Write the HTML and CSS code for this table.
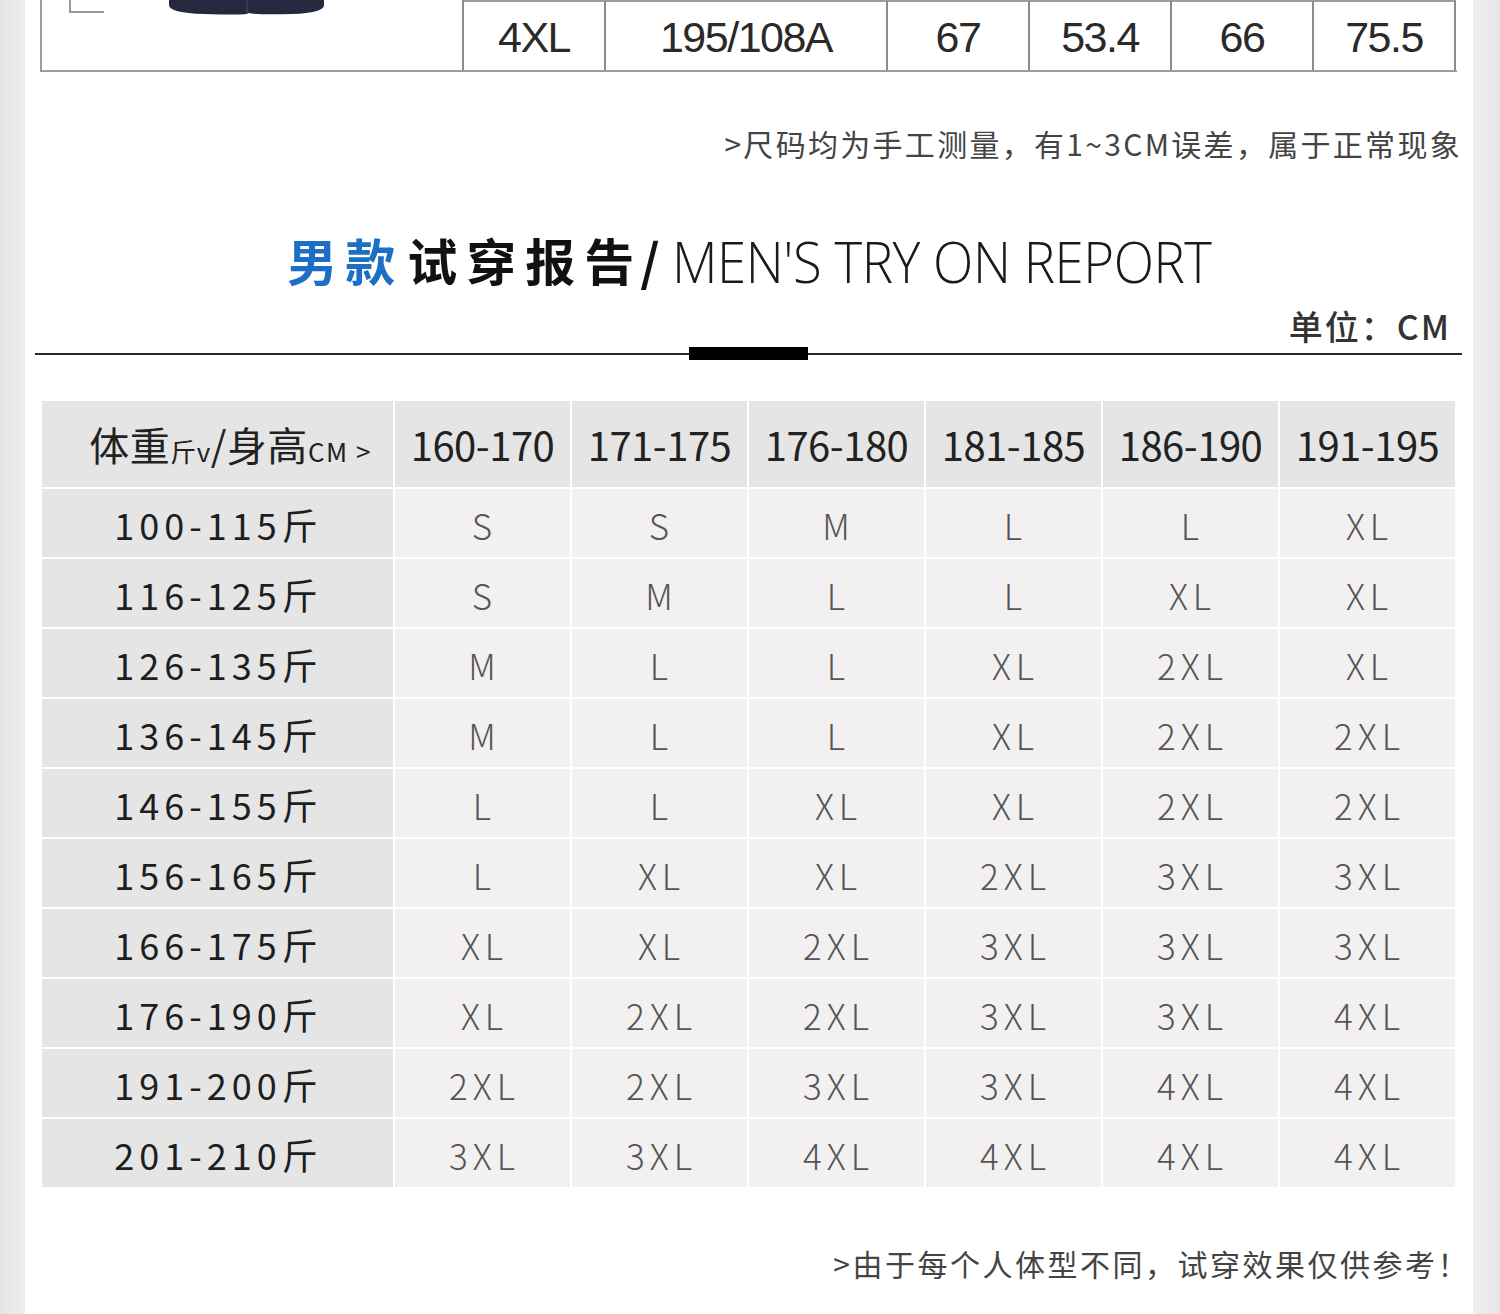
FILE: index.html
```html
<!DOCTYPE html>
<html lang="zh-CN">
<head>
<meta charset="utf-8">
<title>男款试穿报告</title>
<link rel="stylesheet" href="styles.css">
</head>
<body>
<div class="page">
  <div class="spec">
    <div class="spec-pic">
      <svg class="pic-svg" width="424" height="70" viewBox="0 0 424 70">
        <path d="M28 0 V12 H62" fill="none" stroke="#9a9a9a" stroke-width="2"/>
        <path d="M127 0 H282 V5 Q282 13 250 14 Q215 15 206 13 L205 14 Q196 15 162 14 Q127 13 127 5 Z" fill="#27273d"/>
        <path d="M205 0 V14" stroke="#4a4a66" stroke-width="1"/>
      </svg>
    </div>
    <div class="spec-cell c1">4XL</div>
    <div class="spec-cell c2">195/108A</div>
    <div class="spec-cell c1">67</div>
    <div class="spec-cell c1">53.4</div>
    <div class="spec-cell c1">66</div>
    <div class="spec-cell c1 last">75.5</div>
  </div>

  <p class="note note-top">&gt;尺码均为手工测量，有1~3CM误差，属于正常现象</p>

  <h1 class="title"><span class="t-blue">男款</span><span class="t-black">试穿报告</span><span class="t-slash">/</span><span class="t-en">MEN'S TRY ON REPORT</span></h1>
  <div class="unit">单位：CM</div>
  <div class="divider"><span class="divider-bar"></span></div>

  <div class="size-grid">
    <div class="hd corner">体重<small>斤v</small>/身高<small class="cm">CM &gt;</small></div>
    <div class="hd">160-170</div>
    <div class="hd">171-175</div>
    <div class="hd">176-180</div>
    <div class="hd">181-185</div>
    <div class="hd">186-190</div>
    <div class="hd">191-195</div>

    <div class="rl">100-115斤</div><div class="dc">S</div><div class="dc">S</div><div class="dc">M</div><div class="dc">L</div><div class="dc">L</div><div class="dc">XL</div>
    <div class="rl">116-125斤</div><div class="dc">S</div><div class="dc">M</div><div class="dc">L</div><div class="dc">L</div><div class="dc">XL</div><div class="dc">XL</div>
    <div class="rl">126-135斤</div><div class="dc">M</div><div class="dc">L</div><div class="dc">L</div><div class="dc">XL</div><div class="dc">2XL</div><div class="dc">XL</div>
    <div class="rl">136-145斤</div><div class="dc">M</div><div class="dc">L</div><div class="dc">L</div><div class="dc">XL</div><div class="dc">2XL</div><div class="dc">2XL</div>
    <div class="rl">146-155斤</div><div class="dc">L</div><div class="dc">L</div><div class="dc">XL</div><div class="dc">XL</div><div class="dc">2XL</div><div class="dc">2XL</div>
    <div class="rl">156-165斤</div><div class="dc">L</div><div class="dc">XL</div><div class="dc">XL</div><div class="dc">2XL</div><div class="dc">3XL</div><div class="dc">3XL</div>
    <div class="rl">166-175斤</div><div class="dc">XL</div><div class="dc">XL</div><div class="dc">2XL</div><div class="dc">3XL</div><div class="dc">3XL</div><div class="dc">3XL</div>
    <div class="rl">176-190斤</div><div class="dc">XL</div><div class="dc">2XL</div><div class="dc">2XL</div><div class="dc">3XL</div><div class="dc">3XL</div><div class="dc">4XL</div>
    <div class="rl">191-200斤</div><div class="dc">2XL</div><div class="dc">2XL</div><div class="dc">3XL</div><div class="dc">3XL</div><div class="dc">4XL</div><div class="dc">4XL</div>
    <div class="rl">201-210斤</div><div class="dc">3XL</div><div class="dc">3XL</div><div class="dc">4XL</div><div class="dc">4XL</div><div class="dc">4XL</div><div class="dc">4XL</div>
  </div>

  <p class="note note-bottom">&gt;由于每个人体型不同，试穿效果仅供参考！</p>
</div>
</body>
</html>
```
FILE: styles.css
```css
* { box-sizing: border-box; }
html, body { margin: 0; padding: 0; }
body {
  background: linear-gradient(to right, #e4e4e4 0, #eeeeee 25px, #ffffff 25px, #ffffff 1473px, #eeeeee 1473px, #e6e6e6 1500px);
  width: 1500px;
  height: 1314px;
  overflow: hidden;
  font-family: "Noto Sans CJK SC", "Noto Sans", sans-serif;
  color: #222;
}
.page {
  margin-left: 25px;
  width: 1448px;
  height: 1314px;
  background: #fff;
}

/* top spec row */
.spec {
  display: flex;
  margin-left: 15px;
  width: 1417px;
  height: 72px;
  border-left: 2px solid #9c9c9c;
  border-bottom: 2px solid #9c9c9c;
}
.spec-pic {
  width: 422px;
  border-right: 2px solid #8c8c8c;
}
.pic-svg { display: block; }
.spec-cell {
  border-top: 2px solid #9c9c9c;
  border-right: 2px solid #8c8c8c;
  display: flex;
  align-items: center;
  justify-content: center;
  font-family: "Liberation Sans", "Noto Sans", sans-serif;
  font-size: 43px;
  color: #2a2a2a;
  letter-spacing: -1.5px;
  padding-top: 2px;
}
.spec-cell.c1 { width: 142px; }
.spec-cell.c2 { width: 282px; }
.spec-cell.last { width: 142px; }

.note {
  margin: 0;
  text-align: right;
  color: #444;
  font-size: 30px;
  line-height: 40px;
}
.note-top {
  margin-top: 51px;
  padding-right: 11px;
  letter-spacing: 2.3px;
}

.title {
  margin: 66px 0 0;
  text-align: center;
  font-size: 50px;
  line-height: 60px;
  font-weight: 700;
  color: #111;
  white-space: nowrap;
}
.t-blue { color: #1d6fc5; letter-spacing: 8px; }
.t-black { letter-spacing: 9px; margin-left: 4px; }
.t-slash { margin-left: -3px; margin-right: 12px; }
.t-en {
  display: inline-block;
  font-family: "Open Sans", "Noto Sans", sans-serif;
  font-weight: 300;
  font-size: 57px;
  color: #1a1a1a;
  letter-spacing: -0.5px;
  transform: scaleX(0.925);
  transform-origin: left center;
  margin-right: -44px;
  vertical-align: -2px;
}

.unit {
  text-align: right;
  padding-right: 22px;
  margin-top: 15px;
  font-size: 34px;
  line-height: 40px;
  font-weight: 500;
  color: #333;
  letter-spacing: 2px;
}
.divider {
  position: relative;
  margin: 7px 11px 0 10px;
  height: 2px;
  background: #2a2a2a;
}
.divider-bar {
  position: absolute;
  left: 654px;
  top: -6px;
  width: 119px;
  height: 13px;
  background: #000;
}

.size-grid {
  margin: 46px 0 0 17px;
  width: 1413px;
  display: grid;
  grid-template-columns: 351px repeat(6, 1fr);
  grid-template-rows: 86px repeat(10, 68px);
  gap: 2px;
}
.hd, .rl, .dc {
  display: flex;
  align-items: center;
  justify-content: center;
  white-space: nowrap;
}
.hd {
  background: #e5e5e5;
  font-size: 40px;
  color: #222;
  letter-spacing: -0.5px;
}
.corner {
  font-size: 40px;
  letter-spacing: 0.5px;
  padding-left: 26px;
}
.corner small { font-size: 26px; margin-top: 12px; }
.corner small.cm { letter-spacing: 1.5px; }
.rl {
  background: #e5e5e5;
  font-size: 36px;
  letter-spacing: 5px;
  color: #1e1e1e;
  padding-top: 2px;
  padding-left: 2px;
}
.dc {
  background: #f2f0f0;
  font-size: 35px;
  letter-spacing: 5px;
  color: #555;
  font-weight: 300;
  padding-top: 2px;
  padding-left: 4px;
}

.note-bottom {
  margin-top: 56px;
  padding-right: 3px;
  letter-spacing: 2.5px;
}
```
